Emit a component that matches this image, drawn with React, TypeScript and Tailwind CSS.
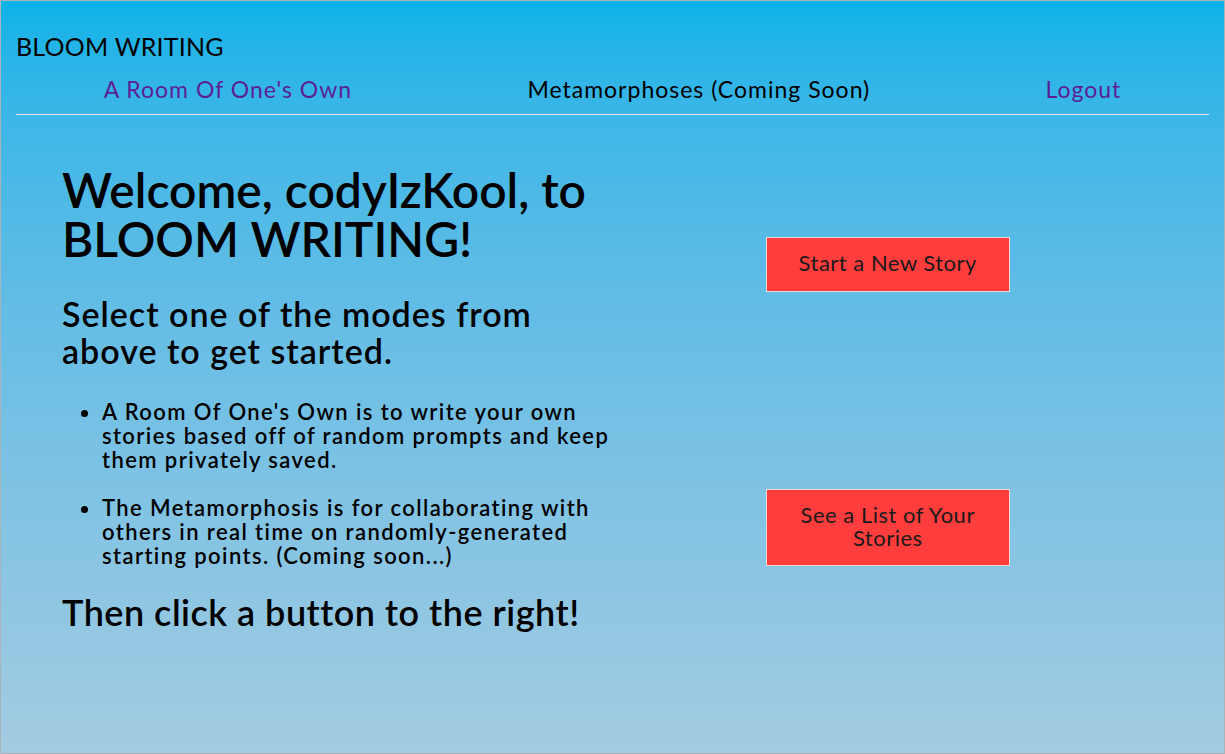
export default function App() {
  return (
    <div
      className="min-h-screen border border-[#a9b4ba] bg-gradient-to-b from-[#07b2e8] to-[#a3cbe1] text-black"
      style={{ fontFamily: 'Lato, "Open Sans", sans-serif', height: 754 }}
    >
      <header className="px-[15px] pt-[30px]">
        <div className="text-[25px] leading-[30px] font-normal tracking-[0.2px]">BLOOM WRITING</div>
        <nav className="flex justify-around pt-[13px] pb-[10px] text-[23px] leading-[30px] tracking-[1px]">
          <a className="text-[#5b1f96]">A Room Of One&apos;s Own</a>
          <a className="text-black">Metamorphoses (Coming Soon)</a>
          <a className="text-[#5b1f96]">Logout</a>
        </nav>
        <hr className="border-0 border-t border-[#e6e6e6]" />
      </header>

      <main className="grid grid-cols-2 px-[61px]">
        <section className="pt-[50px]">
          <h1 className="text-[48px] leading-[49px] font-semibold">
            Welcome, codyIzKool, to BLOOM WRITING!
          </h1>
          <h2 className="mt-[32px] text-[34px] leading-[37px] font-semibold tracking-[1px] pr-[20px]">
            Select one of the modes from above to get started.
          </h2>
          <ul className="mt-[31px] pl-[40px] list-disc text-[22px] leading-[24px] font-semibold tracking-[1.4px]">
            <li>
              A Room Of One&apos;s Own is to write your own stories based off of random prompts and keep
              them privately saved.
            </li>
            <li className="mt-[24px]">
              The Metamorphosis is for collaborating with others in real time on randomly-generated
              starting points. (Coming soon...)
            </li>
          </ul>
          <h3 className="mt-[24px] text-[36px] leading-[40px] font-semibold tracking-[0.5px]">
            Then click a button to the right!
          </h3>
        </section>

        <section className="flex flex-col items-center pt-[122px]">
          <button className="w-[244px] h-[55px] bg-[#ff3d3d] border border-[#e8d8d8] text-[22px] leading-[23px] tracking-[0.5px] text-[#1a1a1a] px-[20px] pb-[5px]">
            Start a New Story
          </button>
          <button className="mt-[197px] w-[244px] h-[77px] bg-[#ff3d3d] border border-[#e8d8d8] text-[22px] leading-[23px] tracking-[0.5px] text-[#1a1a1a] px-[20px] pb-[4px]">
            See a List of Your Stories
          </button>
        </section>
      </main>
    </div>
  );
}
